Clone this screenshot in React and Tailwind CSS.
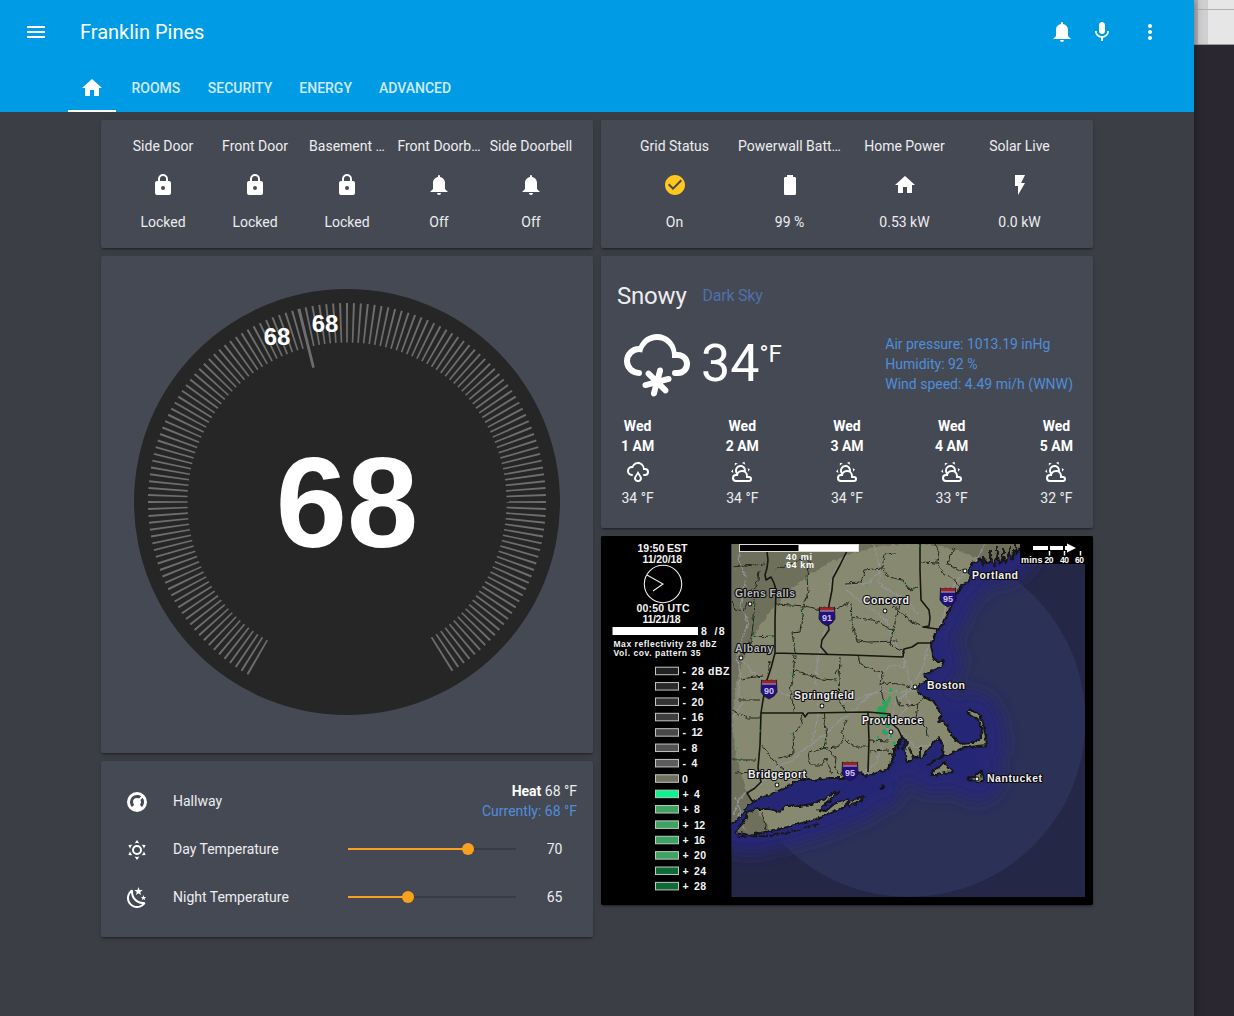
import React from "react";
import { MdCheckCircle, MdMenu, MdMic, MdMoreVert } from "react-icons/md";

const P = {
  bell: "M14,20A2,2 0 0,1 12,22A2,2 0 0,1 10,20H14M12,2A1,1 0 0,1 13,3V4.08C15.84,4.56 18,7.03 18,10V16L21,19H3L6,16V10C6,7.03 8.16,4.56 11,4.08V3A1,1 0 0,1 12,2Z",
  lock: "M12,17A2,2 0 0,0 14,15C14,13.89 13.1,13 12,13A2,2 0 0,0 10,15A2,2 0 0,0 12,17M18,8A2,2 0 0,1 20,10V20A2,2 0 0,1 18,22H6A2,2 0 0,1 4,20V10C4,8.89 4.9,8 6,8H7V6A5,5 0 0,1 12,1A5,5 0 0,1 17,6V8H18M12,3A3,3 0 0,0 9,6V8H15V6A3,3 0 0,0 12,3Z",
  battery: "M16.67,4H15V2H9V4H7.33A1.33,1.33 0 0,0 6,5.33V20.67C6,21.4 6.6,22 7.33,22H16.67A1.33,1.33 0 0,0 18,20.67V5.33C18,4.6 17.4,4 16.67,4Z",
  home: "M10,20V14H14V20H19V12H22L12,3L2,12H5V20H10Z",
  flash: "M7,2V13H10V22L17,10H13L17,2H7Z",
  snowy: "M6,14A1,1 0 0,1 7,15A1,1 0 0,1 6,16A5,5 0 0,1 1,11A5,5 0 0,1 6,6C7,3.65 9.3,2 12,2C15.43,2 18.24,4.66 18.5,8.03L19,8A4,4 0 0,1 23,12A4,4 0 0,1 19,16H18A1,1 0 0,1 17,15A1,1 0 0,1 18,14H19A2,2 0 0,0 21,12A2,2 0 0,0 19,10H17V9A5,5 0 0,0 12,4C9.5,4 7.45,5.82 7.06,8.19C6.73,8.07 6.37,8 6,8A3,3 0 0,0 3,11A3,3 0 0,0 6,14M7.88,18.07L10.07,17.5L8.46,15.88C8.07,15.5 8.07,14.86 8.46,14.46C8.85,14.07 9.5,14.07 9.88,14.46L11.5,16.07L12.07,13.88C12.21,13.34 12.76,13.03 13.29,13.17C13.83,13.31 14.14,13.86 14,14.4L13.41,16.59L15.6,16C16.14,15.86 16.69,16.17 16.83,16.71C16.97,17.24 16.66,17.79 16.12,17.93L13.93,18.5L15.54,20.12C15.93,20.5 15.93,21.15 15.54,21.54C15.15,21.93 14.5,21.93 14.12,21.54L12.5,19.93L11.93,22.12C11.79,22.66 11.24,22.97 10.71,22.83C10.17,22.69 9.86,22.14 10,21.6L10.59,19.41L8.4,20C7.86,20.14 7.31,19.83 7.17,19.29C7.03,18.76 7.34,18.21 7.88,18.07Z",
  rainy: "M6,14A1,1 0 0,1 7,15A1,1 0 0,1 6,16A5,5 0 0,1 1,11A5,5 0 0,1 6,6C7,3.65 9.3,2 12,2C15.43,2 18.24,4.66 18.5,8.03L19,8A4,4 0 0,1 23,12A4,4 0 0,1 19,16H18A1,1 0 0,1 17,15A1,1 0 0,1 18,14H19A2,2 0 0,0 21,12A2,2 0 0,0 19,10H17V9A5,5 0 0,0 12,4C9.5,4 7.45,5.82 7.06,8.19C6.73,8.07 6.37,8 6,8A3,3 0 0,0 3,11A3,3 0 0,0 6,14M14.83,15.67C16.39,17.23 16.39,19.5 14.83,21.08C14.05,21.86 13,22 12,22C11,22 9.95,21.86 9.17,21.08C7.61,19.5 7.61,17.23 9.17,15.67L12,11L14.83,15.67M13.41,16.69L12,14.25L10.59,16.69C9.8,17.5 9.8,18.7 10.59,19.5C11,19.93 11.5,20 12,20C12.5,20 13,19.93 13.41,19.5C14.2,18.7 14.2,17.5 13.41,16.69Z",
  partly: "M12.74,5.47C15.1,6.5 16.35,9.03 15.92,11.46C17.19,12.56 18,14.19 18,16V16.17C18.31,16.06 18.65,16 19,16A3,3 0 0,1 22,19A3,3 0 0,1 19,22H6A4,4 0 0,1 2,18A4,4 0 0,1 6,14H6.27C5,12.45 4.6,10.24 5.5,8.26C6.72,5.5 9.97,4.24 12.74,5.47M11.93,7.3C10.16,6.5 8.09,7.31 7.31,9.07C6.85,10.09 6.93,11.22 7.41,12.13C8.5,10.83 10.16,10 12,10C12.7,10 13.38,10.12 14,10.34C13.94,9.06 13.18,7.86 11.93,7.3M13.55,3.64C13,3.4 12.45,3.23 11.88,3.12L14.37,1.82L15.27,4.71C14.76,4.29 14.19,3.93 13.55,3.64M6.09,4.44C5.6,4.79 5.17,5.19 4.8,5.63L4.91,2.82L7.87,3.5C7.25,3.71 6.65,4.03 6.09,4.44M18,9.71C17.91,9.12 17.78,8.55 17.59,8L19.97,9.5L17.92,11.73C18.03,11.08 18.05,10.4 18,9.71M3.04,11.3C3.11,11.9 3.24,12.47 3.43,13L1.06,11.5L3.1,9.28C3,9.93 2.97,10.61 3.04,11.3M19,18H16V16A4,4 0 0,0 12,12A4,4 0 0,0 8,16H6A2,2 0 0,0 4,18A2,2 0 0,0 6,20H19A1,1 0 0,0 20,19A1,1 0 0,0 19,18Z",
  sunny: "M12,7A5,5 0 0,1 17,12A5,5 0 0,1 12,17A5,5 0 0,1 7,12A5,5 0 0,1 12,7M12,9A3,3 0 0,0 9,12A3,3 0 0,0 12,15A3,3 0 0,0 15,12A3,3 0 0,0 12,9M12,2L14.39,5.42C13.65,5.15 12.84,5 12,5C11.16,5 10.35,5.15 9.61,5.42L12,2M3.34,7L7.5,6.65C6.9,7.16 6.36,7.78 5.94,8.5C5.5,9.24 5.25,10 5.11,10.79L3.34,7M3.36,17L5.12,13.23C5.26,14 5.53,14.78 5.95,15.5C6.37,16.24 6.91,16.86 7.5,17.37L3.36,17M20.65,7L18.88,10.79C18.74,10 18.47,9.23 18.05,8.5C17.63,7.78 17.1,7.15 16.5,6.64L20.65,7M20.64,17L16.5,17.36C17.09,16.85 17.62,16.22 18.04,15.5C18.46,14.77 18.73,14 18.87,13.21L20.64,17M12,22L9.59,18.56C10.33,18.83 11.14,19 12,19C12.82,19 13.63,18.83 14.37,18.56L12,22Z",
  night: "M17.75,4.09L15.22,6.03L16.13,9.09L13.5,7.28L10.87,9.09L11.78,6.03L9.25,4.09L12.44,4L13.5,1L14.56,4L17.75,4.09M21.25,11L19.61,12.25L20.2,14.23L18.5,13.06L16.8,14.23L17.39,12.25L15.75,11L17.81,10.95L18.5,9L19.19,10.95L21.25,11M18.97,15.95C19.8,15.87 20.69,17.05 20.16,17.8C19.84,18.25 19.5,18.67 19.08,19.07C15.17,23 8.84,23 4.94,19.07C1.03,15.17 1.03,8.83 4.94,4.93C5.34,4.53 5.76,4.17 6.21,3.85C6.96,3.32 8.14,4.21 8.06,5.04C7.79,7.9 8.75,10.87 10.95,13.06C13.14,15.26 16.1,16.22 18.97,15.95M17.33,17.97C14.5,17.81 11.7,16.64 9.53,14.5C7.36,12.31 6.2,9.5 6.04,6.68C3.23,9.82 3.34,14.64 6.35,17.66C9.37,20.67 14.19,20.78 17.33,17.97Z",
  nest: "M16.95,16.95L14.83,14.83C15.55,14.1 16,13.1 16,12C16,11.26 15.79,10.57 15.43,10L17.6,7.81C18.5,9 19,10.43 19,12C19,13.93 18.22,15.68 16.95,16.95M12,5C13.57,5 15,5.5 16.19,6.4L14,8.56C13.43,8.21 12.74,8 12,8A4,4 0 0,0 8,12C8,13.1 8.45,14.1 9.17,14.83L7.05,16.95C5.78,15.68 5,13.93 5,12A7,7 0 0,1 12,5M12,2A10,10 0 0,0 2,12A10,10 0 0,0 12,22A10,10 0 0,0 22,12A10,10 0 0,0 12,2Z",
};

function Icon({ d, className = "size-6" }) {
  return (
    <svg viewBox="0 0 24 24" className={`shrink-0 fill-white ${className}`}>
      <path d={d} fillRule="evenodd" />
    </svg>
  );
}

function Card({ className = "", children }) {
  return (
    <section className={`overflow-hidden rounded-[2px] bg-[#454954] shadow-[0_2px_2px_0_rgba(0,0,0,0.14),0_1px_5px_0_rgba(0,0,0,0.12),0_3px_1px_-2px_rgba(0,0,0,0.2)] ${className}`}>
      {children}
    </section>
  );
}

function Glance({ items }) {
  return (
    <Card className="flex h-32 px-4 pt-4">
      {items.map(([name, icon, state]) => (
        <div key={name} className="flex w-0 flex-1 flex-col items-center px-1">
          <div className="text-center whitespace-nowrap">{name}</div>
          <div className="mt-[17px] mb-[15px]">
            {icon === "check" ? <MdCheckCircle className="size-6 text-[#ffc720]" /> : <Icon d={P[icon]} />}
          </div>
          <div>{state}</div>
        </div>
      ))}
    </Card>
  );
}

const TICKS = Array.from({ length: 150 }, (_, i) => -150 + i * 2);

function Dial() {
  return (
    <Card className="h-[497px] pt-[33px]">
      <svg viewBox="-213 -213 426 426" className="mx-auto h-[426px] w-[426px]" fontFamily="Liberation Sans, sans-serif">
        <circle r="213" fill="#262626" />
        {TICKS.map((a) => (
          <path
            key={a}
            d={a === -14 ? "M-1.5,-199H1.5L1.3,-138.500H-1.3Z" : "M-1,-199H1L0.800,-159.500H-0.800Z"}
            fill="#6e6e6e"
            transform={`rotate(${a})`}
          />
        ))}
        <g fill="#fff" fontWeight="700" textAnchor="middle">
          <text x="-70" y="-157" fontSize="24">68</text>
          <text x="-22" y="-170" fontSize="24">68</text>
          <text x="0" y="45" fontSize="128">68</text>
        </g>
      </svg>
    </Card>
  );
}

function SliderRow({ icon, label, value, fill }) {
  return (
    <div className="flex h-12 items-center">
      <Icon d={P[icon]} className="mx-2 size-6 translate-y-px" />
      <div className="ml-4 w-[175px]">{label}</div>
      <div className="relative h-0.5 w-[168px] bg-[#3a3c45]">
        <div className="h-full bg-[#f9a11f]" style={{ width: fill }} />
        <div className="absolute top-1/2 size-3 -translate-x-1/2 -translate-y-1/2 rounded-full bg-[#f9a11f]" style={{ left: fill }} />
      </div>
      <div className="ml-4 w-[45px] text-center">{value}</div>
    </div>
  );
}

function Thermostat() {
  return (
    <Card className="h-44 px-4 pt-4">
      <div className="flex h-12 items-center">
        <Icon d={P.nest} className="mx-2 size-6 translate-y-px" />
        <div className="ml-4 flex-1">Hallway</div>
        <div className="text-right">
          <div><b className="font-bold text-white">Heat</b> 68 °F</div>
          <div className="text-[#4f8edb]">Currently: 68 °F</div>
        </div>
      </div>
      <SliderRow icon="sunny" label="Day Temperature" value="70" fill="71.5%" />
      <SliderRow icon="night" label="Night Temperature" value="65" fill="35.8%" />
    </Card>
  );
}

const HOURS = [
  ["1 AM", "rainy", "34 °F"],
  ["2 AM", "partly", "34 °F"],
  ["3 AM", "partly", "34 °F"],
  ["4 AM", "partly", "33 °F"],
  ["5 AM", "partly", "32 °F"],
];

function Weather() {
  return (
    <Card className="h-[272px] px-4 pt-6">
      <div className="flex h-8 items-center text-2xl">
        <span className="tracking-[-0.2px]">Snowy</span>
        <span className="ml-4 text-base tracking-[-0.25px] text-[#4f70aa]">Dark Sky</span>
      </div>
      <div className="mt-4 flex h-[72px] items-center px-1">
        <Icon d={P.snowy} className="size-[72px]" />
        <div className="ml-2 flex items-start text-white">
          <span className="text-[52px] leading-[72px]">34</span>
          <span className="text-2xl leading-[52px]">°F</span>
        </div>
        <div className="ml-auto text-[#4f8edb]">
          <div>Air pressure: 1013.19 inHg</div>
          <div>Humidity: 92 %</div>
          <div>Wind speed: 4.49 mi/h (WNW)</div>
        </div>
      </div>
      <div className="mt-4 flex justify-between px-1">
        {HOURS.map(([h, icon, t]) => (
          <div key={h} className="flex flex-col items-center">
            <b className="font-bold text-white">Wed</b>
            <b className="font-bold text-white">{h}</b>
            <Icon d={P[icon]} className="my-1 size-6" />
            <div>{t}</div>
          </div>
        ))}
      </div>
    </Card>
  );
}

const MAINLAND =
  "M724,536H1022L1019,551 1014,549 1013,560 1009,552 1006,563 1003,556 1000,565 997,552 994,567 991,558 988,564 985,559 984,567 980,558 977,562 972,563 968,572 971,576 968,583 962,585 958,592 955,598 951,605 947,616 943,623 938,629 934,637 931,645 933,656 936,661 944,661 941,667 932,671 924,675 927,681 919,684 918,692 925,698 933,701 938,708 941,715 939,721 946,724 950,733 955,740 964,744 974,742 981,738 982,728 976,717 967,713 970,710 978,713 983,722 985,733 987,745 977,746 960,749 952,754 942,757 943,746 939,738 933,744 927,751 922,758 914,757 908,762 905,752 908,742 902,736 898,743 893,752 892,762 888,769 879,772 868,776 858,772 845,778 830,778 814,780 798,780 790,785 778,791 766,796 755,800 748,806 741,816 736,822 724,826Z";
const LONG_ISLAND =
  "M735,832 L744,822 748,812 756,809 768,809 780,812 785,806 800,806 812,804 824,799 840,790 834,797 823,806 819,810 826,811 834,804 847,800 849,803 838,810 822,817 805,822 788,827 770,831 750,835Z";
const ISLANDS = [
  "M930,775 L934,770 940,766 944,762 948,768 953,772 944,773 936,775Z",
  "M966,778 L974,777 981,771 983,780 978,783 971,780Z",
  "M847,803 L858,799 864,796 861,801 849,806Z",
  "M880,789 L883,785 883,789Z",
  "M893,750 L896,744 895,756Z",
];
const BORDERS = [
  "M766,544 L768,560 767,568 765,575 766,580 771,577 774,583 776,590 775,620 775,653 771,668 767,680 763,700 761,713 760,745 758,768 761,782 755,788 747,793 752,801",
  "M775,653 L812,654 850,655 903,657 904,649 912,647 918,643 931,643",
  "M761,713 L803,713 805,717 808,713 868,712 890,714 891,723 898,729 902,737",
  "M847,551 L840,565 833,578 832,590 829,605 828,620 829,630 822,640 821,647 828,655",
  "M920,544 L920,570 921,600 929,610 930,618 929,626 923,627 937,629",
  "M868,713 L869,740 868,772",
];
const COUNTIES = [
  "M732,567 L765,564", "M759,571 L757,586 749,592 755,601 754,617 751,640 744,655", "M732,601 L735,610 744,612 747,603",
  "M751,637 L774,636", "M740,679 L763,676 M768,675L770,660", "M738,700 L760,700 M733,711L748,718 760,718",
  "M776,604 L806,606 829,612 850,602", "M803,608 L800,632 792,633 795,653", "M802,608 L808,592 807,577 810,563 806,558 795,562 775,570",
  "M795,655 L793,675 790,690 794,711", "M793,670 L806,674 820,679 836,680", "M840,657 L838,700 847,712 M842,665L834,674",
  "M858,655 L860,664 876,671 883,672 M883,672L880,683 883,699 889,706",
  "M852,603 L851,620 857,641 868,642 898,641", "M851,617 L873,620 893,630 890,645 905,653",
  "M845,583 L861,582 865,570 882,568 884,554 896,553", "M882,568 L888,577 902,580 910,590 918,587",
  "M903,597 L898,612 893,630", "M893,606 L912,622 922,625", "M921,562 L937,563 943,574 952,577 960,587",
  "M937,562 L939,552 935,544", "M955,548 L950,555 948,565 955,568 966,572",
  "M880,683 L902,684 917,690", "M896,695 L900,706 918,704 924,697", "M918,704 L916,718 926,728 927,736",
  "M803,713 L801,725 793,735 794,753 785,757 778,758", "M823,713 L827,735 824,748 837,747 843,740 842,730 846,720",
  "M808,752 L810,765 822,765 826,758 832,775 M809,753L825,748 836,757 835,767 842,776",
  "M761,745 L773,760 785,770", "M733,760 L757,760 M735,773L758,772", "M845,740 L856,747 868,747 M869,740L888,741 M869,751L889,750",
  "M762,812 L766,830", "M955,713 L962,711",
];
const ROADS = [
  "M742,544 L738,560 746,576 744,590 740,605 748,622 741,644 737,660 741,675 738,690 742,704 733,716",
  "M741,660 L754,673 768,683 784,694 803,700 822,697 845,702 868,695 886,691 903,692 912,688",
  "M849,553 L838,566 831,582 829,604 826,625 822,645 818,658 816,680 817,695 818,715 815,730 811,745",
  "M811,745 L800,752 792,761 779,765 770,775 755,788 740,797 733,815", "M811,745 L826,733 838,722 855,709 867,697",
  "M874,544 L878,562 880,572 868,583 846,585", "M880,572 L879,583 888,590 905,599 918,614",
  "M846,590 L862,603 877,613 887,621 893,640 903,655 907,670 912,688",
  "M968,571 L957,580 948,597 943,618 937,630 928,645 924,665 916,680",
  "M917,690 L905,694 895,702 893,715 888,730 889,738 880,750 877,762 866,772 840,777",
  "M891,728 L905,736 915,747 930,745 944,742", "M905,694 L910,705 902,713 893,728", "M903,655 L904,668 893,664 880,675 880,690 867,697",
  "M985,544 L975,562 968,571", "M735,797 L741,812 736,823 746,830",
];
const RAIN =
  "M876,713 L879,707 883,705 883,700 886,701 888,697 891,698 889,704 886,709 887,716 883,719 880,716Z M886,722H890V728H886Z M882,731H887V735H882Z M889,734H892V739H889Z M893,741H896V745H893Z M878,736H880V739H878Z M889,688H892V691H889Z";
const SPECKS = [
  [735, 568], [744, 588], [753, 604], [755, 620], [800, 609], [806, 577], [795, 649], [771, 637], [812, 655], [790, 672], [835, 681], [762, 709],
  [790, 733], [824, 740], [759, 730], [736, 747], [737, 760], [851, 612], [866, 585], [894, 632], [884, 557], [903, 582], [913, 589], [867, 666],
  [918, 545], [857, 545], [752, 636], [845, 713], [871, 713], [895, 696], [898, 691], [875, 742], [872, 722],
];
const SHIELDS = [[827, 616, "91"], [948, 597, "95"], [769, 689, "90"], [850, 771, "95"]];
const CITIES = [
  ["Glens Falls", 735, 597, 60, 750, 604], ["Albany", 735, 652, 38, 741, 658], ["Concord", 863, 604, 46, 885, 611],
  ["Portland", 972, 579, 46, 965, 571], ["Springfield", 794, 699, 60, 822, 706], ["Boston", 927, 689, 38, 915, 687],
  ["Providence", 862, 724, 61, 891, 732], ["Bridgeport", 748, 778, 58, 777, 785], ["Nantucket", 987, 782, 55, 977, 779],
];
const LEGEND = [
  ["-", "28 dBZ", "#1f2220", 38], ["-", "24", "#2a2a2b", 12], ["-", "20", "#333333", 12], ["-", "16", "#3e3e3e", 12], ["-", "12", "#484848", 11],
  ["-", "8", "#525252", 6], ["-", "4", "#5c5c5c", 6], ["", "0", "#6f715e", 6], ["+", "4", "#08f58c", 6], ["+", "8", "#3ea262", 6],
  ["+", "12", "#3ea262", 11], ["+", "16", "#3ea262", 11], ["+", "20", "#3ea262", 12], ["+", "24", "#0d6b35", 12], ["+", "28", "#0d6b35", 12],
];

function Shield({ x, y, n }) {
  return (
    <g transform={`translate(${x} ${y})`}>
      <path d="M-7.500,-9 L-5,-8 -2.500,-9 0,-8 2.500,-9 5,-8 7.500,-9 8,3 5,7 0,10 -5,7 -8,3Z" fill="#24107c" stroke="#15151c" strokeWidth="0.8" />
      <path d="M-7,-9 L-5,-8 -2.500,-9 0,-8 2.500,-9 5,-8 7,-9V-5.500H-7Z" fill="#a3231c" />
      <path d="M-7,-5H7" stroke="#b9b2cf" strokeWidth="1" />
      <text y="5" textAnchor="middle" fontSize="9" fontWeight="700" fill="#cbc3e8" textLength="10" lengthAdjust="spacingAndGlyphs">{n}</text>
    </g>
  );
}

function Radar() {
  const land = [MAINLAND, LONG_ISLAND, ...ISLANDS].join(" ");
  return (
    <Card className="h-[369px] bg-black">
      <svg viewBox="601 536 492 369" className="block h-[369px] w-[492px]" fontFamily="Liberation Sans, sans-serif">
        <defs>
          <clipPath id="map-frame"><rect x="731.5" y="544" width="353.500" height="353" /></clipPath>
          <clipPath id="land-mask"><path d={land} /></clipPath>
          <filter id="shore" x="-20%" y="-20%" width="140%" height="140%"><feGaussianBlur stdDeviation="8" /></filter>
          <filter id="jagged" filterUnits="userSpaceOnUse" x="720" y="530" width="370" height="370">
            <feTurbulence type="fractalNoise" baseFrequency="0.22" numOctaves="2" seed="4" />
            <feDisplacementMap in="SourceGraphic" scale="5" xChannelSelector="R" yChannelSelector="G" />
          </filter>
        </defs>
        <rect x="601" y="536" width="492" height="369" fill="#000" />
        <g clipPath="url(#map-frame)">
          <rect x="731" y="543" width="355" height="355" fill="#252747" />
          <circle cx="909" cy="720.5" r="176.500" fill="#2c3158" />
          <path d={land} fill="#262676" stroke="#262676" strokeWidth="38" strokeLinejoin="round" filter="url(#shore)" />
          <g filter="url(#jagged)">
            <path d={land} fill="#6e705b" />
            <g clipPath="url(#land-mask)"><circle cx="909" cy="720.5" r="176.500" fill="#878a6f" /></g>
            <g clipPath="url(#land-mask)" fill="none" strokeLinejoin="round">
              <path d={ROADS.join(" ")} stroke="#94949a" strokeWidth="1.1" />
              <path d={COUNTIES.join(" ")} stroke="#24261f" strokeWidth="1" />
            </g>
            <path d={land} fill="none" stroke="#131318" strokeWidth="1.8" strokeLinejoin="bevel" />
            <g fill="none" stroke="#131318" strokeWidth="1.800">
              <path d="M737,837 L770,836 795,831 818,824" strokeDasharray="9 2" />
              <path d="M926,766 L942,757" />
              <path d="M899,740V749M905,741L902,752M890,752L893,760M909,748L913,757M920,748V757" />
              <path d="M983,556V566M990,550V562M997,546V560M1003,548V562M1010,546V556M1016,544V556" />
            </g>
            <path d={RAIN} fill="#2fa45c" />
          </g>
          <path d={BORDERS.join(" ")} fill="none" stroke="#17170f" strokeWidth="1.6" strokeLinejoin="round" />
          <g fill="#2fa45c">
            {SPECKS.map(([x, y]) => <rect key={`${x}-${y}`} x={x} y={y} width="1.500" height="1.500" />)}
          </g>
          <rect x="1020" y="543" width="66" height="21" fill="#000" />
        </g>

        {SHIELDS.map(([x, y, n]) => <Shield key={`${x}-${n}`} x={x} y={y} n={n} />)}
        <g fontSize="10.5" fontWeight="700" fill="#f0f0f0" stroke="#0c0c10" strokeWidth="2.2" paintOrder="stroke" strokeLinejoin="round">
          {CITIES.map(([name, x, y, w, cx, cy]) => (
            <g key={name}>
              <text x={x} y={y} textLength={w} fill={x < 740 ? "#b8b8b8" : "#f0f0f0"}>{name}</text>
              <circle cx={cx} cy={cy} r="1.4" stroke="#0c0c10" strokeWidth="2" />
            </g>
          ))}
        </g>

        <rect x="739.5" y="544.5" width="119" height="7" fill="#fff" stroke="#ddd" strokeWidth="1" />
        <rect x="740" y="545" width="58.500" height="6" fill="#000" />
        <g fontSize="9" fontWeight="700" fill="#fff">
          <text x="786" y="560" textLength="26">40 mi</text>
          <text x="786" y="568" textLength="28">64 km</text>
          <text x="1021" y="562.5" textLength="21.500">mins</text>
          <text x="1044.500" y="562.5" textLength="9" fontSize="8.5">20</text>
          <text x="1060" y="562.5" textLength="9" fontSize="8.5">40</text>
          <text x="1075" y="562.5" textLength="9" fontSize="8.5">60</text>
        </g>
        <path d="M1033,548H1048M1050,548H1063M1065,548H1070" stroke="#fff" strokeWidth="4" />
        <path d="M1067,543.500L1076,548L1067,552.500Z" fill="#fff" />
        <path d="M1049.500,551V555.500M1064.500,551V555.500M1080.500,551V555.500" stroke="#fff" strokeWidth="1.5" />

        <g fontSize="11" fontWeight="700" fill="#f4f4f4">
          <text x="637.500" y="552" textLength="50" fontSize="10.5">19:50 EST</text>
          <text x="642.500" y="563" textLength="39.500" fontSize="10.5">11/20/18</text>
          <text x="636.500" y="612" textLength="53" fontSize="10.5">00:50 UTC</text>
          <text x="642.500" y="623" textLength="38" fontSize="10.5">11/21/18</text>
          <text x="701" y="634.500" fontSize="10.5">8</text>
          <text x="714.500" y="634.500" fontSize="10.5" textLength="10">/8</text>
          <text x="613.500" y="647" fontSize="8.500" textLength="103">Max reflectivity 28 dbZ</text>
          <text x="613.500" y="656" fontSize="8.500" textLength="87">Vol. cov. pattern 35</text>
        </g>
        <circle cx="663" cy="584" r="18.700" fill="none" stroke="#eee" strokeWidth="1.1" />
        <path d="M647,575L663,584L653,591" fill="none" stroke="#eee" strokeWidth="1.1" />
        <rect x="612.500" y="627" width="85.500" height="8" fill="#fff" />
        {LEGEND.map(([sign, label, color, w], i) => {
          const y = 671 + i * 15.37;
          return (
            <g key={sign + label} fontSize="10.5" fontWeight="700" fill="#f4f4f4">
              <rect x="655.500" y={y - 3.8} width="23" height="7.500" fill={color} stroke="#c4c4c4" strokeWidth="1" />
              <text x="682.500" y={y + 4}>{sign}</text>
              <text x={sign === "" ? 682 : i > 7 ? 694 : 691.5} y={y + 4} textLength={w}>{label}</text>
            </g>
          );
        })}
      </svg>
    </Card>
  );
}

function Header() {
  return (
    <header className="h-28 bg-[#009be5] text-white">
      <div className="flex h-16 items-center pr-8 pl-6">
        <MdMenu className="size-6" />
        <h1 className="ml-8 text-xl">Franklin Pines</h1>
        <Icon d={P.bell} className="ml-auto size-6" />
        <MdMic className="ml-4 size-6" />
        <MdMoreVert className="ml-6 size-6" />
      </div>
      <nav className="flex h-12 items-center pl-[68px] font-medium">
        <div className="flex h-full w-12 items-center justify-center border-b-2 border-white pt-0.5">
          <Icon d={P.home} />
        </div>
        <span className="ml-[15.5px] text-white/80">ROOMS</span>
        <span className="ml-[27.5px] text-white/80">SECURITY</span>
        <span className="ml-[27px] text-white/80">ENERGY</span>
        <span className="ml-[27px] text-white/80">ADVANCED</span>
      </nav>
    </header>
  );
}

export default function App() {
  return (
    <div className="flex h-[1016px] w-[1234px] overflow-hidden bg-[#2a2730] font-['Roboto',sans-serif] text-sm leading-5 text-[#ededee]">
      <div className="z-10 w-[1194px] bg-[#3c3e46] shadow-[0_0_8px_rgba(0,0,0,0.45)]">
        <Header />
        <main className="flex justify-center gap-2 pt-2">
          <div className="flex w-[492px] flex-col gap-2">
            <Glance
              items={[
                ["Side Door", "lock", "Locked"],
                ["Front Door", "lock", "Locked"],
                ["Basement …", "lock", "Locked"],
                ["Front Doorb…", "bell", "Off"],
                ["Side Doorbell", "bell", "Off"],
              ]}
            />
            <Dial />
            <Thermostat />
          </div>
          <div className="flex w-[492px] flex-col gap-2">
            <Glance
              items={[
                ["Grid Status", "check", "On"],
                ["Powerwall Batt…", "battery", "99 %"],
                ["Home Power", "home", "0.53 kW"],
                ["Solar Live", "flash", "0.0 kW"],
              ]}
            />
            <Weather />
            <Radar />
          </div>
        </main>
      </div>
      <aside className="w-10">
        <div className="flex h-[45px] border-b border-[#9a9a9a] bg-[#e6e6e6]">
          <div className="h-full w-[3.5px] bg-[#b4b4b6]" />
          <div className="h-full w-[10.5px] bg-[#cfcfd1]" />
          <div className="-ml-3.5 h-[9.5px] flex-1 border-b border-[#b0b0ae]" />
        </div>
      </aside>
    </div>
  );
}
